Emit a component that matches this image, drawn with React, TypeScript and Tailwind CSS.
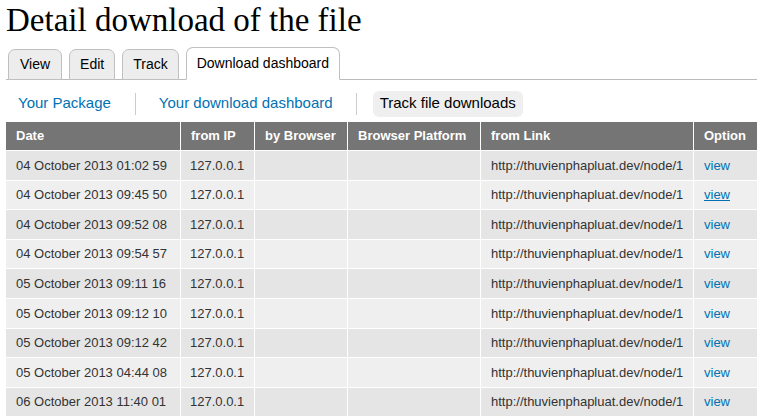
import React from "react";

const rows = [
  "04 October 2013 01:02 59",
  "04 October 2013 09:45 50",
  "04 October 2013 09:52 08",
  "04 October 2013 09:54 57",
  "05 October 2013 09:11 16",
  "05 October 2013 09:12 10",
  "05 October 2013 09:12 42",
  "05 October 2013 04:44 08",
  "06 October 2013 11:40 01",
];

const cols = "grid grid-cols-[174px_73px_92px_132px_212px_63px] gap-x-px";

export default function App() {
  return (
    <div className="w-[764px] h-[417px] overflow-hidden bg-white pl-[6px] pr-[7px] font-['Liberation_Sans',Arial,sans-serif] text-[#333]">
      <h1 className="font-['Liberation_Serif','Times_New_Roman',serif] text-[33px] leading-[38px] text-black pt-[1px] h-[47px]">
        Detail download of the file
      </h1>
      <div className="flex items-end gap-[7px] pl-[2px] border-b border-[#bbb] h-[33px]">
        <div className="h-[31px] -mb-px px-[11px] flex items-center bg-[#ededed] border border-[#c0c0c0] rounded-t-[7px] text-[14px] text-black">View</div>
        <div className="h-[31px] -mb-px px-[10px] flex items-center bg-[#ededed] border border-[#c0c0c0] rounded-t-[7px] text-[14px] text-black">Edit</div>
        <div className="h-[31px] -mb-px px-[10px] flex items-center bg-[#ededed] border border-[#c0c0c0] rounded-t-[7px] text-[14px] text-black">Track</div>
        <div className="h-[33px] -mb-px px-[10px] flex items-center bg-white border border-b-white border-[#c0c0c0] rounded-t-[7px] text-[14px] text-black">Download dashboard</div>
      </div>
      <div className="flex items-center h-[42px] pt-[5px] text-[15px]">
        <div className="pl-[5px] pr-[17px]">
          <span className="px-[7px] text-[#0071b3]">Your Package</span>
        </div>
        <div className="px-[16px] border-l border-[#ccc] h-[22px] flex items-center">
          <span className="px-[7px] text-[#0071b3]">Your download dashboard</span>
        </div>
        <div className="px-[16px] border-l border-[#ccc] h-[22px] flex items-center">
          <span className="px-[7px] h-[26px] flex items-center bg-[#efefef] rounded-[6px] text-black">Track file downloads</span>
        </div>
      </div>
      <div className="text-[13px]">
        <div className={`${cols} bg-white`}>
          {["Date", "from IP", "by Browser", "Browser Platform", "from Link", "Option"].map((h) => (
            <div key={h} className="bg-[#757575] h-[28px] flex items-center pl-[10px] font-bold text-white">
              {h}
            </div>
          ))}
        </div>
        {rows.map((d, i) => {
          const bg = i % 2 === 0 ? "bg-[#e5e5e5]" : "bg-[#efefef]";
          return (
            <div key={i} className={`${cols} mt-px`}>
              <div className={`${bg} h-[28.6px] flex items-center pl-[10px]`}>{d}</div>
              <div className={`${bg} h-[28.6px] flex items-center pl-[9px]`}>127.0.0.1</div>
              <div className={`${bg} h-[28.6px]`}></div>
              <div className={`${bg} h-[28.6px]`}></div>
              <div className={`${bg} h-[28.6px] flex items-center pl-[10px]`}>http://thuvienphapluat.dev/node/1</div>
              <div className={`${bg} h-[28.6px] flex items-center pl-[10px]`}>
                <span className={`text-[#0071b3] ${i === 1 ? "underline" : ""}`}>view</span>
              </div>
            </div>
          );
        })}
      </div>
    </div>
  );
}
